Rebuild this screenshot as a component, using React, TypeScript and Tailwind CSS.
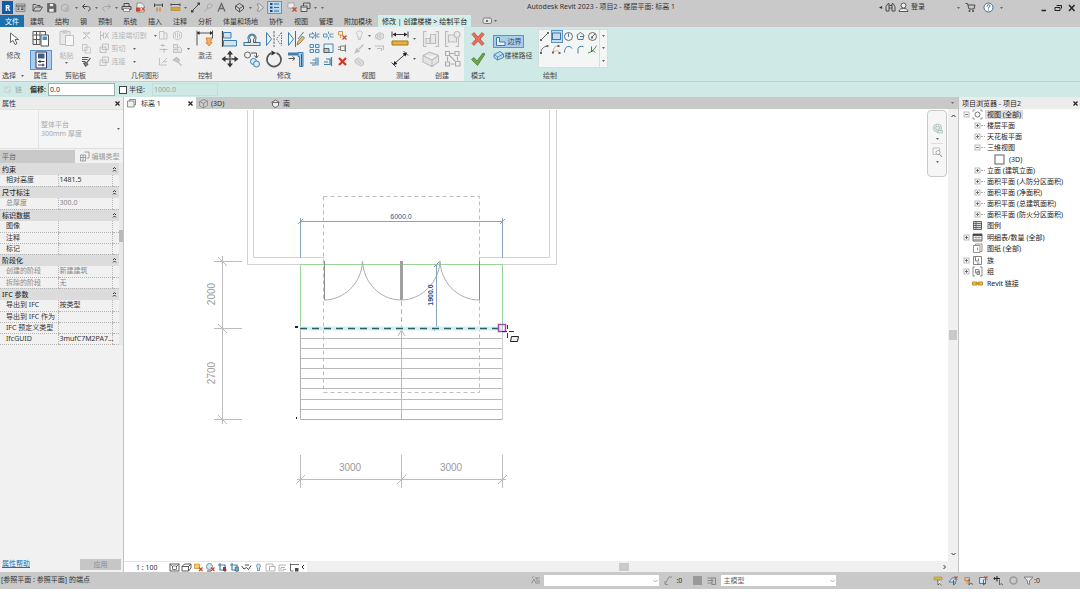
import React from "react";

// Icon art is drawn on a grid of half pixels: an 11px icon is 22 units wide, an 18px one 36.
const D = "#4a4a4a";
const G = "#bdbdbd";
const B = "#3f7fae";
const O = "#d98a3a";
const R = "#c8452f";

const ICONS: Record<string, React.ReactNode> = {
  home: <><rect x="2" y="4" width="18" height="15" stroke={D} /><path d="M2 8h18M5 12h4M5 15h4M12 12h5M12 15h5" stroke={D} strokeWidth="2" /></>,
  open: <path d="M2 18V5h6l2 2h6v4M2 18l5-8h14l-5 8z" stroke={D} strokeWidth="1.8" />,
  save: <><path d="M3 3h14l3 3v14H3z" fill="#666" stroke={D} /><path d="M7 3h8v6H7zM6 13h10v7H6z" fill="#eee" stroke={D} /></>,
  sync: <><path d="M3 8l7-4 7 4v7l-7 4-7-4z" stroke="#a0a0a0" strokeWidth="1.6" /><circle cx="14" cy="15" r="5" fill="#b5b5b5" /></>,
  undo: <path d="M8 4L3 9l5 5M3 9h10c7 0 7 8 1 9" stroke={D} strokeWidth="2" />,
  redo: <path d="M14 4l5 5-5 5M19 9H9C2 9 2 17 8 18" stroke="#a5a5a5" strokeWidth="2" />,
  print: <><path d="M6 9V3h10v6M6 15H2V9h18v6h-4" stroke={D} strokeWidth="2" /><path d="M5 13h12v6H5z" fill="#eee" stroke={D} /></>,
  pdf: <><path d="M4 2h9l5 5v13H4z" fill="#eee" stroke={D} /><path d="M2 11h9v8H2z" fill={R} /><path d="M13 10l6 8M19 10l-6 8" stroke={R} strokeWidth="2" /></>,
  dimv: <><path d="M3 3v7M19 3v7M3 6h16" stroke={D} strokeWidth="2" /><path d="M8 11v8M14 11v8" stroke={O} strokeWidth="3" /></>,
  ruler: <><path d="M2 3v5M20 3v5M2 5h18" stroke={D} strokeWidth="2" /><rect x="2" y="11" width="18" height="6" fill="#e0a32e" stroke="#a87716" /></>,
  line: <><path d="M4 18L18 4" stroke={D} strokeWidth="2" /><path d="M2 16h5v5H2zM15 1h5v5h-5z" fill={D} /></>,
  tag: <path d="M3 19l6-7M9 12V6l5-3 5 4-4 5z" stroke="#aaa" strokeWidth="2" />,
  textA: <path d="M4 19L11 3l7 16M7 13h8" stroke="#666" strokeWidth="2.6" />,
  cube: <path d="M3 8l8-5 8 5v6l-8 6-8-6zM3 8l8 5 8-5M11 13v7" stroke={D} strokeWidth="1.8" />,
  section: <path d="M4 4h5l8 7-8 7H4l4-7z" fill="#ddd" stroke="#888" strokeWidth="1.8" />,
  thin: <><path d="M2 4h5M2 11h5M2 18h5" stroke="#2d4c6e" strokeWidth="4" /><path d="M10 4h10M10 11h10M10 18h10" stroke="#2d4c6e" strokeWidth="1.6" /></>,
  close: <><path d="M2 2h12v10H2z" fill="#eee" stroke="#777" /><path d="M11 11l8 8M19 11l-8 8" stroke={R} strokeWidth="2.6" /></>,
  windows: <><path d="M7 2h13v11H7z" stroke={D} strokeWidth="1.8" /><path d="M2 8h12v11H2z" fill="#ddd" stroke={D} strokeWidth="1.8" /><path d="M2 11h12" stroke={D} /></>,
  bino: <path d="M2 18V9l4-6h2v15zM20 18V9l-4-6h-2v15zM8 7h6M8 12h6" stroke={D} strokeWidth="2" />,
  user: <><circle cx="11" cy="7" r="5" fill="#eee" stroke={D} strokeWidth="1.8" /><path d="M2 19c1-5 4-6 9-6s8 1 9 6z" fill="#eee" stroke={D} strokeWidth="1.8" /></>,
  cart: <><path d="M1 3h4l3 11h10l2-8H6" stroke={D} strokeWidth="2" /><circle cx="9" cy="18" r="2" fill={D} /><circle cx="16" cy="18" r="2" fill={D} /></>,
  help: <><circle cx="11" cy="11" r="9" fill="#fff" stroke="#2f5c93" strokeWidth="1.8" /><path d="M8 9c0-5 7-4 6-1-1 2-3 2-3 5M11 15v2" stroke="#2f5c93" strokeWidth="2" /></>,
  cut: <path d="M4 4l14 14M18 4L4 18M5 6h12M5 16h5" stroke={G} strokeWidth="2" />,
  copy: <path d="M3 3h9v12H3zM8 8h9l2 2v10H8z" fill="#f0f0f0" stroke={G} strokeWidth="1.6" />,
  match: <><path d="M2 3h13M2 7h11M2 11h7" stroke="#555" strokeWidth="2.4" /><path d="M19 4l-8 10" stroke={D} strokeWidth="2.4" /><path d="M5 14l6-1 3 4-5 4z" fill="#777" stroke={D} strokeWidth="1.6" /></>,
  cope: <path d="M3 2v18M3 11h6M9 5v12M12 5l7 12M19 5l-7 12" stroke={G} strokeWidth="2" />,
  join: <path d="M7 2h12v11H7zM2 8h12v11H2z" fill="#ececec" stroke={G} strokeWidth="1.8" />,
  box: <path d="M3 3h9v15H3zM12 6h6v12h-6" stroke={G} strokeWidth="1.8" />,
  solid: <path d="M3 6l8-4 8 4v10l-8 4-8-4zM7 6v9M11 5v12M15 7v8" stroke={G} strokeWidth="1.6" />,
  wallj: <path d="M9 2v5M5 5h9M3 13h16M12 11v8" stroke={G} strokeWidth="2.4" />,
  split: <path d="M3 4v14h15M7 15L18 4M12 12l6-1" stroke={G} strokeWidth="1.8" />,
  paint: <path d="M3 3h8v7H3zM3 13h8v6H3zM11 11l4-4 4 4v8h-8" fill="#e6e6e6" stroke={G} strokeWidth="1.8" />,
  hammer: <path d="M3 8l6-5 6 5-4 4zM11 11l8 8" fill="#ccc" stroke={G} strokeWidth="2.6" />,
  splitA: <><path d="M1 8h6V5l4 6-4 6v-3H1z" stroke={B} strokeWidth="1.6" /><path d="M21 8h-5v6h5M13 4v14" stroke={B} strokeWidth="1.6" /></>,
  splitB: <path d="M1 8h7v6H1zM21 8h-7v6h7M11 3v5M11 14v5" stroke={B} strokeWidth="1.6" />,
  unpin: <><path d="M3 3h8v7H3zM7 10v6" stroke={O} strokeWidth="1.8" /><path d="M11 11l8 8M19 11l-8 8" stroke={R} strokeWidth="2.4" /></>,
  array: <path d="M2 3h7v6H2zM13 3h7v6h-7zM2 13h7v6H2zM13 13h7v6h-7z" fill="#dcebf5" stroke={B} strokeWidth="1.8" />,
  scale: <><path d="M2 2h18v17H2z" fill="#eaf3f8" stroke={B} strokeWidth="1.8" /><path d="M2 11h10v8H2z" fill="#a9cde4" stroke={D} strokeWidth="1.6" /></>,
  pin: <path d="M7 6h9v9H7zM2 8h5M2 13h5M17 3v15" stroke="#777" strokeWidth="1.8" />,
  trimA: <path d="M2 14h12M14 3v16M18 3v16M7 8h5M6 18h6" stroke={B} strokeWidth="2.2" />,
  trimB: <path d="M2 17h12V6h-8M17 2v18M2 12h8" stroke={B} strokeWidth="2.4" />,
  del: <path d="M4 4l14 14M18 4L4 18" stroke="#cc3a2a" strokeWidth="4.4" />,
  bulb: <path d="M11 2c7 0 7 7 3 10v4H8v-4C4 9 4 2 11 2zM8 19h6" stroke={G} strokeWidth="1.8" />,
  boxes: <path d="M3 10l8-5 8 3v8l-8 4-8-4zM7 8v9M12 7v10" fill="#ddd" stroke={G} strokeWidth="1.6" />,
  brush: <path d="M19 3L10 12M3 19l3-7 4 4z" stroke={G} strokeWidth="2.8" />,
  lwork: <path d="M2 6h17v8M6 11h9v5" stroke={G} strokeWidth="2.2" />,
  dispb: <path d="M2 8l7-4 10 7v6l-6 3L2 13zM6 9l8 6" fill="#ddd" stroke={G} strokeWidth="1.8" />,
  dline: <><path d="M4 18L18 4" stroke={D} strokeWidth="1.8" /><path d="M2 16h4v4H2zM16 2h4v4h-4z" fill="#666" /></>,
  drect: <rect x="3" y="4" width="16" height="13" stroke="#2f6f9f" strokeWidth="1.8" />,
  dcirc: <><circle cx="11" cy="11" r="8" stroke={D} strokeWidth="1.6" /><path d="M11 5v7" stroke={B} strokeWidth="2" /></>,
  dcirc2: <><path d="M11 3l7 5-2 9H6L4 8z" stroke={D} strokeWidth="1.6" /><path d="M10 11h8" stroke={B} strokeWidth="2" /></>,
  dcirc3: <><circle cx="11" cy="11" r="8" stroke={D} strokeWidth="1.6" /><path d="M10 12l6-6" stroke={D} strokeWidth="1.8" /><path d="M8 11h4v4H8z" fill="#666" /></>,
  arc1: <><path d="M4 18C4 10 9 5 17 4" stroke={D} strokeWidth="1.6" /><path d="M2 16h4v4H2zM15 2h4v4h-4z" fill="#666" /></>,
  arc2: <><path d="M4 17C5 7 9 3 14 4" stroke={O} strokeWidth="1.6" /><path d="M5 17C9 12 14 13 17 17" stroke={O} strokeWidth="1.2" /><path d="M2 15h4v4H2zM15 16h4v4h-4zM13 2h4v4h-4z" fill="#666" /></>,
  arc3: <path d="M3 17C3 3 15 2 18 9" stroke={B} strokeWidth="2" />,
  arc4: <path d="M6 19V9c1-4 6-5 11-4" stroke={B} strokeWidth="2" />,
  pick: <><path d="M2 18C10 16 16 10 19 3" stroke="#4d9a4a" strokeWidth="2" /><path d="M9 5v11l3-3 4 4" stroke={D} strokeWidth="1.6" /></>,
  boundary: <path d="M3 3h6v9h11v7H3z" fill="#eaf5fb" stroke="#2f6f9f" strokeWidth="1.8" />,
  path: <><path d="M2 9l12-6 7 5v7l-12 5-7-5z" fill="#bcdcee" stroke={B} strokeWidth="1.8" /><path d="M2 9l7 5 12-6M9 14v6" stroke={B} strokeWidth="1.6" /></>,
  sheet: <path d="M3 6h13v12H3zM7 6V3h12v11h-3" fill="#eee" stroke="#777" strokeWidth="1.6" />,
  view3: <path d="M3 7l9-4 7 3v9l-8 5-8-4zM3 7l8 4 8-5M11 11v9" stroke="#888" strokeWidth="1.6" />,
  hand: <path d="M3 9l8-5 8 5M5 9h12v5c-2 6-10 6-12 0z" fill="#eee" stroke={D} strokeWidth="1.6" />,
  etype: <path d="M3 8h10v12H3zM3 13h10M8 8v12M11 2h9v12h-5" stroke="#999" strokeWidth="1.8" />,
  detail: <><rect x="2" y="4" width="18" height="14" stroke={D} strokeWidth="1.8" /><path d="M2 4l6 6M20 4l-6 6M7 8h8v7H7z" stroke={D} strokeWidth="1.4" /></>,
  vstyle: <path d="M2 9l5-5h13v8l-5 6H2zM2 9h13v9M15 9l5-5" stroke={D} strokeWidth="1.8" />,
  sunoff: <><path d="M3 4h10v9H3z" fill="#f2d25a" stroke={O} strokeWidth="1.6" /><path d="M12 11l7 7M19 11l-7 7" stroke={R} strokeWidth="2.4" /></>,
  shadow: <><circle cx="9" cy="9" r="6" fill="#dbe6ee" stroke="#68839a" strokeWidth="1.8" /><path d="M4 18h8" stroke={D} strokeWidth="2" /><path d="M12 11l7 7M19 11l-7 7" stroke={R} strokeWidth="2.2" /></>,
  crop: <><path d="M6 2v14h14M2 6h14v14" stroke={B} strokeWidth="2.4" /><path d="M12 10h6v8h-6z" fill="#a03838" /></>,
  cropb: <><path d="M6 2v14h14M2 6h14v14" stroke={B} strokeWidth="2.4" /><path d="M12 10h7v8h-7z" fill="#6aa5cc" stroke={D} /></>,
  glass: <path d="M1 8l5 6 5-3 4 4 5-8M8 6h8" stroke={D} strokeWidth="2" />,
  bulb2: <path d="M11 4c5 0 4 6 2 8v5h-4v-5c-2-2-3-8 2-8z" fill="#cfe8f3" stroke={B} strokeWidth="1.6" />,
  tview: <path d="M2 4h14v5M2 4v14h5M9 9h11v9H9z" stroke="#aaa" strokeWidth="1.8" />,
  anal: <path d="M4 19V6h14M8 19v-8h8M12 19v-4h6" stroke="#aaa" strokeWidth="1.8" />,
  revc: <><path d="M2 5h18M3 3v15h6" stroke={D} strokeWidth="1.6" /><path d="M12 12h7v7h-7z" fill={D} /></>,
  wset: <path d="M3 17l5-9 4 9M10 6h9M14 6v12M18 10v8M4 6l3-3" stroke="#8a8a8a" strokeWidth="1.8" />,
  edreq: <path d="M4 18L12 4h6M4 12v7h6" stroke="#888" strokeWidth="1.8" />,
  opt: <path d="M3 6h16M3 11h12M3 16h8M12 5v14h7V5" stroke="#888" strokeWidth="2.2" />,
  selA: <><path d="M2 4h16v6H2z" fill="#e3b53a" stroke="#a87c1f" /><path d="M10 9v11l3-3 4 3" fill="#fff" stroke={D} strokeWidth="1.6" /></>,
  selB: <><path d="M2 14l6-8h8v8z" fill="#cfe0ef" stroke="#4878a8" strokeWidth="1.8" /><path d="M13 3l6 6M19 3l-6 6" stroke={R} strokeWidth="2.2" /><path d="M11 10v10l5-4" stroke={D} strokeWidth="1.6" /></>,
  selC: <><path d="M4 5h9v6H4zM8 11v6" stroke={O} strokeWidth="2.4" /><path d="M12 8v12l3-4 5 3" stroke={D} strokeWidth="1.6" /></>,
  selD: <><path d="M3 5h12v12H3z" fill="#d2e6f3" stroke={B} strokeWidth="2" /><path d="M13 3l6 6M19 3l-6 6" stroke={R} strokeWidth="2.2" /><path d="M11 9v11l5-4" stroke={D} strokeWidth="1.6" /></>,
  selE: <><path d="M2 7h12M8 2v11M4 5L2 7l2 2" stroke="#222" strokeWidth="2.2" /><path d="M13 9v11l3-3 4 3" stroke={D} strokeWidth="1.6" /></>,
  ring: <circle cx="11" cy="11" r="7" stroke="#999" strokeWidth="3" />,
  funnel: <path d="M2 4h18l-7 8v7l-4-2v-5z" fill="#e4e4e4" stroke="#777" strokeWidth="1.8" />,
  views: <><circle cx="11" cy="11" r="5" stroke="#666" strokeWidth="1.8" /><path d="M2 6V2h4M16 2h4v4M20 16v4h-4M6 20H2v-4" stroke="#888" strokeWidth="1.6" /></>,
  view3d: <rect x="2" y="2" width="18" height="18" fill="#fff" stroke="#777" strokeWidth="2.4" />,
  legend: <><path d="M3 3h16v16H3z" fill="#ddd" stroke="#555" strokeWidth="1.8" /><path d="M3 7h16M3 11h16M3 15h16M8 3v16" stroke="#555" strokeWidth="1.6" /></>,
  sched: <><path d="M2 4h18v14H2z" fill="#f5f5f5" stroke="#555" strokeWidth="1.8" /><path d="M2 6h18" stroke="#333" strokeWidth="3.4" /><path d="M2 11h18M2 15h18M8 6v12M14 6v12" stroke="#888" strokeWidth="1.2" /></>,
  sheets: <path d="M3 5h4V2h13v15h-4M3 5h13v14H3zM11 9v6" stroke="#888" strokeWidth="1.8" />,
  family: <path d="M3 3h16v16H3zM7 3v9h6V7M10 16h5" stroke="#777" strokeWidth="1.8" />,
  group: <path d="M6 2H2v18h4M16 2h4v18h-4M7 7h7v7H7zM10 11h5v6h-5z" stroke="#777" strokeWidth="1.7" />,
  link: <path d="M1 8h9v6H1zM12 8h9v6h-9zM7 11h8" fill="#e8c454" stroke="#b8902a" strokeWidth="2" />,
  wheel: <><circle cx="11" cy="10" r="8" fill="#e5efed" stroke="#9fb5b3" strokeWidth="1.6" /><circle cx="11" cy="10" r="4" stroke="#9fb5b3" strokeWidth="1.6" /><path d="M12 15h9v5h-9z" fill="#dff0e9" stroke="#87a89b" /></>,
  zoomr: <><path d="M2 2h13v13H2z" stroke="#b5b5b5" strokeWidth="1.6" /><circle cx="12" cy="11" r="4" fill="#fff" stroke="#999" strokeWidth="1.6" /><path d="M15 14l5 6" stroke="#999" strokeWidth="2" /></>,
};

const BIG: Record<string, React.ReactNode> = {
  arrow: <path d="M11 8v19l5-4 4 8 4-2-4-8h7z" fill="#fff" stroke="#555" strokeWidth="1.8" />,
  props: <><path d="M2 3h14v16H2zM16 3h11v7M2 10h14M9 3v16" fill="#fff" stroke="#555" strokeWidth="2" /><path d="M18 10h15v22H18z" fill="#fff" stroke="#555" strokeWidth="2" /><path d="M21 13h9v7h-9z" fill="#4b8fc0" /><path d="M2 19h14v10H2zM9 19v10" stroke="#555" strokeWidth="2" /></>,
  palette: <><path d="M8 2h21v32H8z" fill="#fff" stroke="#335" strokeWidth="2" /><path d="M12 5h13v10H12z" fill="#3c5f86" /><path d="M12 21h13M12 28h13M16 18v6M22 25v6" stroke="#335" strokeWidth="2" /></>,
  paste: <><path d="M4 5h20v26H4z" fill="#e8e8e8" stroke="#c0c0c0" strokeWidth="2" /><path d="M9 2h10v7H9z" fill="#ccc" /><path d="M15 13h16v20H15z" fill="#f6f6f6" stroke="#c0c0c0" strokeWidth="2" /></>,
  activate: <><path d="M2 3v30M33 3v16M2 8h31" stroke="#555" strokeWidth="2" /><path d="M7 4L2 8l5 4zM28 4l5 4-5 4z" fill="#222" /><path d="M20 18h12l-3 9h3l-6 7-6-7h3z" fill="#f0b070" stroke={O} strokeWidth="2" /></>,
  align: <><path d="M3 2v32" stroke="#444" strokeWidth="2.4" /><path d="M5 5h15v11H5zM5 21h26v11H5z" fill="#cfe3f1" stroke={B} strokeWidth="2" /></>,
  offset: <><path d="M2 31h32v-6h-9v-5a8 8 0 1 0-14 0v5H2z" fill="#d9e9f4" stroke={B} strokeWidth="2.2" /><path d="M8 25h7v-6a5 5 0 1 1 6 0v6h7" fill="#f0f0f0" stroke="#555" strokeWidth="2" /></>,
  mirrorA: <><path d="M3 5v26l10-13z" fill="#eef6fa" stroke={B} strokeWidth="2" /><path d="M18 2v32" stroke="#666" strokeWidth="2" strokeDasharray="5 2" /><path d="M33 5v26L23 18z" stroke={B} strokeWidth="2" strokeDasharray="3 2" /></>,
  mirrorB: <><path d="M3 5v26l10-13z" fill="#eef6fa" stroke={B} strokeWidth="2" /><path d="M17 2v32" stroke="#666" strokeWidth="2" /><path d="M33 4L22 18" stroke={B} strokeWidth="2" /><path d="M20 30l2-7 9-11 4 4-10 11z" fill="#eec06a" stroke="#7b6a43" strokeWidth="1.6" /></>,
  move: <><path d="M18 8v20M8 18h20" stroke="#333" strokeWidth="3" strokeDasharray="7 6" /><path d="M18 1l6 8H12zM18 35l6-8H12zM1 18l8-6v12zM35 18l-8-6v12z" fill="#333" /><path d="M15 15h6v6h-6z" fill="#666" /></>,
  copyb: <><circle cx="9" cy="10" r="6" stroke="#666" strokeWidth="2" /><path d="M16 6h11v8M23 11l4 5 4-5" stroke="#555" strokeWidth="2" /><circle cx="21" cy="23" r="6" fill="#dcebf5" stroke={B} strokeWidth="2" /><circle cx="27" cy="28" r="6" fill="#dcebf5" stroke={B} strokeWidth="2" /></>,
  rotate: <><path d="M23 6a14 14 0 1 1-10 0" stroke="#555" strokeWidth="3.4" /><path d="M13 1v10l9-5z" fill="#333" /></>,
  trim: <><path d="M2 8h20" stroke={B} strokeWidth="6" /><path d="M22 5h10v28h-7V13h-3z" fill="#a8cde6" stroke={B} strokeWidth="2" /><path d="M3 17h12M11 13l5 4-5 4M29 8v24" stroke="#555" strokeWidth="2" /></>,
  measure: <><path d="M2 3v12M34 3v12M4 9h28" stroke="#444" strokeWidth="2" /><path d="M10 5L3 9l7 4zM26 5l7 4-7 4z" fill="#222" /><path d="M2 22h32v8H2z" fill="#e3b53a" stroke="#a87716" strokeWidth="2" /></>,
  dim: <><path d="M6 28L30 7" stroke="#444" strokeWidth="2" /><path d="M1 25l9 9M25 2l9 9" stroke="#444" strokeWidth="2" /><path d="M4 30l3-8 6 6zM32 5l-3 8-6-6z" fill="#222" /></>,
  createA: <path d="M9 3H3v30h6M27 3h6v30h-6M8 17h8v10H8zM17 9h10v18H17z" fill="#e9e9e9" stroke={G} strokeWidth="2.2" />,
  createB: <><path d="M9 3H3v30h6M29 16v17h-6M9 10h16v14H9z" fill="#e9e9e9" stroke={G} strokeWidth="2.2" /><circle cx="26" cy="9" r="6" fill="#e9e9e9" stroke={G} strokeWidth="2.2" /></>,
  createC: <path d="M2 11l13-7 18 7v13l-13 9-18-9zM2 11l18 9 13-9M20 20v13" fill="#e4e4e4" stroke={G} strokeWidth="2.2" />,
  createD: <path d="M3 3h8v8H3zM22 3h8v8h-8zM3 24h8v8H3zM23 23h9v9h-9zM12 7h8M7 13v9M13 28h8M27 13v8M12 12l10 10" stroke="#aaa" strokeWidth="2.2" />,
  cancel: <path d="M6 9l4-4 8 9 8-9 4 4-8 9 8 9-4 4-8-9-8 9-4-4 8-9z" fill="#e8705c" stroke="#c54a39" strokeWidth="1.6" />,
  finish: <path d="M5 19l5-4 6 7L28 6l4 2-15 23z" fill="#6fa54c" stroke="#4c8032" strokeWidth="1.6" />,
};

const Ic = ({ n }: { n: string }) => (
  <svg width="11" height="11" viewBox="0 0 22 22" fill="none" className="shrink-0" aria-hidden="true">{ICONS[n]}</svg>
);

const BigIc = ({ n }: { n: string }) => (
  <svg width="18" height="18" viewBox="0 0 36 36" fill="none" className="shrink-0" aria-hidden="true">{BIG[n]}</svg>
);

const Caret = () => (
  <svg width="5" height="4" viewBox="0 0 10 8" className="shrink-0" aria-hidden="true"><path d="M2 2h6L5 6z" fill="#666" /></svg>
);

const Btn = ({ n, label, className = "" }: { n: string; label: string; className?: string }) => (
  <button aria-label={label} className={`flex shrink-0 items-center justify-center ${className || "w-[13px]"}`}><Ic n={n} /></button>
);

const BigBtn = ({ n, label }: { n: string; label: string }) => (
  <button aria-label={label} className="flex h-5 w-[22px] items-center justify-center"><BigIc n={n} /></button>
);

const Drop = () => (
  <button aria-label="更多" className="flex w-[7px] shrink-0 items-center justify-center"><Caret /></button>
);

function TitleBar() {
  return (
    <header className="flex h-[15px] items-center bg-[#c9c9c9]">
      <div className="flex h-full items-center">
        <button className="ml-0.5 h-[13px] w-[11px] bg-[#1858a8] text-[8px] leading-[9px] font-bold text-white">R</button>
        <Btn n="home" label="主视图" className="w-[15px]" />
        <Btn n="open" label="打开" className="ml-0.5 w-[15px]" />
        <Btn n="save" label="保存" />
        <Btn n="sync" label="同步" className="w-[15px]" />
        <Drop />
        <Btn n="undo" label="放弃" />
        <Drop />
        <Btn n="redo" label="重做" />
        <Drop />
        <Btn n="print" label="打印" />
        <Btn n="pdf" label="PDF" className="w-[15px]" />
        <Btn n="dimv" label="尺寸" className="ml-1 w-[13px]" />
        <Btn n="ruler" label="测量" className="ml-1 w-[13px]" />
        <Drop />
        <Btn n="line" label="对齐尺寸标注" />
        <Btn n="tag" label="标记" />
        <Btn n="textA" label="文字" />
        <Btn n="cube" label="默认三维视图" className="ml-1 w-[15px]" />
        <Drop />
        <Btn n="section" label="剖面" />
        <button aria-label="细线" className="flex h-[13px] w-[15px] items-center justify-center border border-[#5f9bc8] bg-[#b9daf0]"><Ic n="thin" /></button>
        <Btn n="close" label="关闭非活动视图" className="ml-1 w-[13px]" />
        <Btn n="windows" label="切换窗口" />
        <Drop />
        <Drop />
      </div>
      <h1 className="flex-1 pb-0.5 text-center text-[7px] leading-[9px] whitespace-nowrap text-[#333]">Autodesk Revit 2023 - 项目2 - 楼层平面: 标高 1</h1>
      <div className="flex h-full items-center pr-px text-[7px] text-[#333]">
        <button aria-label="展开" className="w-2 text-[6px]">◂</button>
        <Btn n="bino" label="搜索" />
        <Btn n="user" label="帐户" />
        <button className="w-[45px] pl-px text-left">登录</button>
        <Drop />
        <Btn n="cart" label="商店" className="w-4" />
        <Btn n="help" label="帮助" className="w-5" />
        <Drop />
        <div className="ml-8 flex">
          <button aria-label="最小化" className="flex w-3.5 justify-center"><svg width="8" height="8" viewBox="0 0 16 16"><path d="M3 13h9" stroke="#222" strokeWidth="3" /></svg></button>
          <button aria-label="还原" className="flex w-3.5 justify-center"><svg width="8" height="8" viewBox="0 0 16 16" fill="none"><path d="M5 3h10v6M2 7h10v6H2z" stroke="#222" strokeWidth="2" /></svg></button>
          <button aria-label="关闭" className="flex w-3.5 justify-center"><svg width="8" height="8" viewBox="0 0 16 16"><path d="M2 2l11 12M13 2L2 14" stroke="#222" strokeWidth="3" /></svg></button>
        </div>
      </div>
    </header>
  );
}

const TABS = ["建筑", "结构", "钢", "预制", "系统", "插入", "注释", "分析", "体量和场地", "协作", "视图", "管理", "附加模块"];

function RibbonTabs() {
  return (
    <nav className="flex h-3 items-stretch gap-px bg-[#c9c9c9] text-[7px] leading-[11px] whitespace-nowrap text-[#333]">
      <button className="w-6 bg-[#1d6fae] text-white">文件</button>
      {TABS.map(t => <button key={t} className="px-[5px]">{t}</button>)}
      <button className="bg-[#d5eeea] px-1 text-[#222]">修改 | 创建楼梯 &gt; 绘制平台</button>
      <button aria-label="显示选项" className="ml-2.5 flex items-center">
        <svg width="11" height="8" viewBox="0 0 22 16" fill="none"><rect x="2" y="2" width="17" height="11" rx="3" fill="#e5e5e5" stroke="#666" strokeWidth="1.6" /><circle cx="10" cy="8" r="2" fill="#444" /></svg>
        <Caret />
      </button>
    </nav>
  );
}

function Panel({ label, w, children, mint }: { label: React.ReactNode; w: string; children: React.ReactNode; mint?: boolean }) {
  return (
    <section className={`flex shrink-0 flex-col ${w} ${mint ? "" : "bg-[#f0f0f0]"}`}>
      <div className="flex h-[43px] justify-center pt-0.5">{children}</div>
      <div className="flex h-[11px] items-center justify-center gap-1 text-[7px] leading-[11px] text-[#444]">{label}</div>
    </section>
  );
}

const SmallCol = ({ items, w = "w-3.5" }: { items: [string, string][]; w?: string }) => (
  <div className={`flex flex-col ${w}`}>
    {items.map(([n, label], i) => (
      <button key={i} aria-label={label} className="flex h-[13px] items-center justify-center"><Ic n={n} /></button>
    ))}
  </div>
);

const LabelBtn = ({ n, text }: { n: string; text: string }) => (
  <button className="flex h-[13px] items-center gap-0.5 text-[7px] leading-[9px] whitespace-nowrap text-[#b5b5b5]">
    <Ic n={n} />{text}<span className="w-0.5" /><Caret />
  </button>
);

function Ribbon() {
  const draw = ["dline", "drect", "dcirc", "dcirc2", "dcirc3", "arc1", "arc2", "arc3", "arc4", "pick"];
  return (
    <div className="flex border-b border-[#bfd0ce] bg-[#cfeae6]">
      <Panel label={<>选择<Caret /></>} w="w-[27px]">
        <button className="flex flex-col items-center text-[7px] leading-[10px] text-[#555]"><BigIc n="arrow" /><span className="mt-1">修改</span></button>
      </Panel>
      <Panel label="属性" w="w-[27px]">
        <div className="flex flex-col items-center gap-px">
          <BigBtn n="props" label="类型属性" />
          <button aria-label="属性" className="flex h-5 w-[22px] items-center justify-center border border-[#5c94c4] bg-[#a9cdee]"><BigIc n="palette" /></button>
        </div>
      </Panel>
      <Panel label="剪贴板" w="w-[43px]">
        <button className="flex w-[22px] flex-col items-center text-[7px] leading-[10px] text-[#b5b5b5]"><BigIc n="paste" /><span className="mt-1">粘贴</span><Caret /></button>
        <SmallCol items={[["cut", "剪切"], ["copy", "复制"], ["match", "匹配类型"]]} w="w-[18px]" />
      </Panel>
      <Panel label="几何图形" w="w-24">
        <div className="flex w-[58px] shrink-0 flex-col items-start">
          <LabelBtn n="cope" text="连接端切割" />
          <LabelBtn n="join" text="剪切" />
          <LabelBtn n="join" text="连接" />
        </div>
        <SmallCol items={[["box", "屋顶连接"], ["wallj", "墙连接"], ["split", "分割面"]]} />
        <SmallCol items={[["solid", "梁柱连接"], ["paint", "填色"], ["hammer", "拆除"]]} />
        <div className="flex flex-col pt-[13px]"><span className="flex h-[13px]"><Drop /></span></div>
      </Panel>
      <Panel label="控制" w="w-6">
        <button className="flex flex-col items-center text-[7px] leading-[10px] text-[#555]"><BigIc n="activate" /><span className="mt-1">激活</span></button>
      </Panel>
      <Panel label="修改" w="w-[134px]">
        <div className="grid auto-rows-min grid-cols-4">
          {[["align", "对齐"], ["offset", "偏移"], ["mirrorA", "镜像-拾取轴"], ["mirrorB", "镜像-绘制轴"], ["move", "移动"], ["copyb", "复制"], ["rotate", "旋转"], ["trim", "修剪"]].map(([n, l]) => <BigBtn key={n} n={n} label={l} />)}
        </div>
        <SmallCol items={[["splitA", "拆分图元"], ["array", "阵列"], ["trimA", "修剪单个"]]} />
        <SmallCol items={[["splitB", "用间隙拆分"], ["scale", "缩放"], ["trimB", "修剪多个"]]} />
        <SmallCol items={[["unpin", "解锁"], ["pin", "锁定"], ["del", "删除"]]} />
      </Panel>
      <Panel label="视图" w="w-[35px]">
        <SmallCol items={[["bulb", "隐藏"], ["brush", "替换"], ["dispb", "置换"]]} />
        <div className="flex flex-col"><span className="flex h-[13px]"><Drop /></span><span className="flex h-[13px]"><Drop /></span></div>
        <SmallCol items={[["boxes", "选择框"], ["lwork", "线处理"]]} w="w-3" />
      </Panel>
      <Panel label="测量" w="w-[34px]">
        <div><BigBtn n="measure" label="测量" /><BigBtn n="dim" label="尺寸标注" /></div>
        <div className="flex flex-col"><span className="flex h-5"><Drop /></span><span className="flex h-5"><Drop /></span></div>
      </Panel>
      <Panel label="创建" w="w-11">
        <div className="grid auto-rows-min grid-cols-2">
          {[["createA", "创建组"], ["createB", "创建类似"], ["createC", "创建部件"], ["createD", "创建零件"]].map(([n, l]) => <BigBtn key={n} n={n} label={l} />)}
        </div>
      </Panel>
      <Panel label="模式" w="w-7" mint>
        <div><BigBtn n="cancel" label="取消" /><BigBtn n="finish" label="完成" /></div>
      </Panel>
      <Panel label="绘制" w="w-[116px]" mint>
        <div className="flex w-[45px] shrink-0 flex-col items-start gap-px pt-1.5 text-[7px] leading-[11px] whitespace-nowrap text-[#444]">
          <button className="flex h-[13px] w-[31px] items-center gap-0.5 border border-[#5c94c4] bg-[#a9cdee] pl-px"><Ic n="boundary" />边界</button>
          <button className="flex h-[13px] items-center gap-px"><Ic n="path" />楼梯路径</button>
        </div>
        <div className="flex h-[39px] border border-[#d5dedd] bg-[#f4f6f6]">
          <div className="grid auto-rows-min grid-cols-5">
            {draw.map(n => (
              <button key={n} aria-label={n} className={`flex h-[13px] w-3 items-center justify-center ${n === "drect" ? "border border-[#5c94c4] bg-[#c4dff2]" : ""}`}><Ic n={n} /></button>
            ))}
          </div>
          <div className="flex w-2 flex-col justify-around border-l border-[#d5dedd]"><Drop /><Drop /><Drop /></div>
        </div>
      </Panel>
    </div>
  );
}

function OptionsBar() {
  return (
    <div className="flex h-[15px] items-center bg-[#cfeae6] text-[7px] leading-[9px] text-[#333]">
      <label className="flex w-[30px] items-center gap-1 pl-1 text-[#9aa]">
        <input type="checkbox" checked disabled readOnly className="m-0 size-[7px] opacity-50" />链
      </label>
      <label htmlFor="offset" className="w-[18px] font-bold whitespace-nowrap">偏移:</label>
      <input id="offset" defaultValue="0.0" className="h-[13px] w-[67px] border border-[#9ab0ae] bg-white px-px" />
      <label className="ml-1 flex w-[33px] items-center gap-0.5 whitespace-nowrap">
        <input type="checkbox" className="m-0 size-2 appearance-none border border-[#444] bg-white" />半径:
      </label>
      <input aria-label="半径值" disabled defaultValue="1000.0" className="h-[13px] w-[66px] border border-[#c4dedb] px-px text-[#8fa5a3]" />
    </div>
  );
}

type Row = [string, string, boolean?];
const PROPS: { group: string; rows: Row[] }[] = [
  { group: "约束", rows: [["相对高度", "1481.5"]] },
  { group: "尺寸标注", rows: [["总厚度", "300.0", true]] },
  { group: "标识数据", rows: [["图像", ""], ["注释", ""], ["标记", ""]] },
  { group: "阶段化", rows: [["创建的阶段", "新建建筑", true], ["拆除的阶段", "无", true]] },
  { group: "IFC 参数", rows: [["导出到 IFC", "按类型"], ["导出到 IFC 作为", ""], ["IFC 预定义类型", ""], ["IfcGUID", "3mufC7M2PA7..."]] },
];

function Properties() {
  return (
    <aside className="flex w-[124px] shrink-0 flex-col border-r border-[#c4c4c4] bg-[#f1f1f1] text-[7px] leading-[9px] text-[#333]">
      <div className="flex h-3 items-center justify-between bg-[#ececec] px-0.5">
        <h2>属性</h2>
        <CloseX />
      </div>
      <button className="flex h-10 items-center border-y border-[#e0e0e0] bg-[#f5f5f5] pr-0.5 text-left text-[#aaa]">
        <span className="h-full w-[39px] border-r border-[#e2e2e2]" />
        <span className="flex-1 pl-0.5">整体平台<br />300mm 厚度</span>
        <Caret />
      </button>
      <div className="flex h-[14px] items-center">
        <select aria-label="类型" className="h-[13px] w-[75px] appearance-none bg-[#c9c9c9] px-0.5 text-[#666]"><option>平台</option></select>
        <button className="flex flex-1 items-center justify-center gap-0.5 text-[#999]"><Ic n="etype" />编辑类型</button>
      </div>
      <div className="flex">
        <table className="w-[119px] table-fixed border-collapse">
          <colgroup><col className="w-[58px]" /><col /><col className="w-[7px]" /></colgroup>
          <tbody>
            {PROPS.map(({ group, rows }) => (
              <React.Fragment key={group}>
                <tr className="h-3 bg-[#dcdcdc]">
                  <th colSpan={2} className="p-0 pl-0.5 text-left font-medium">{group}</th>
                  <td className="p-0">
                    <svg width="5" height="7" viewBox="0 0 10 14" fill="none"><path d="M2 6l3-3 3 3M2 11l3-3 3 3" stroke="#333" strokeWidth="2" /></svg>
                  </td>
                </tr>
                {rows.map(([k, v, off]) => (
                  <tr key={k} className={`h-[11px] ${off ? "text-[#888]" : ""}`}>
                    <td className="border-b border-dotted border-[#b5b5b5] p-0 pl-1.5 leading-[10px] whitespace-nowrap">{k}</td>
                    <td className="border-b border-l border-dotted border-[#b5b5b5] p-0 pl-px leading-[10px] whitespace-nowrap">{v}</td>
                    <td className="border-b border-l border-dotted border-[#b5b5b5] p-0" />
                  </tr>
                ))}
              </React.Fragment>
            ))}
          </tbody>
        </table>
        <div className="flex-1 bg-[#e9e9e9] pt-[67px]"><div className="h-3 bg-[#b9b9b9]" /></div>
      </div>
      <div className="mt-auto flex h-[13px] items-start justify-between pr-0.5 pl-0.5">
        <a href="#help" className="text-[#1d6fae] underline">属性帮助</a>
        <button disabled className="h-[11px] w-[41px] bg-[#c6c6c6] text-[#8b8b8b]">应用</button>
      </div>
    </aside>
  );
}

const CloseX = () => (
  <button aria-label="关闭" className="flex items-center">
    <svg width="7" height="7" viewBox="0 0 14 14"><path d="M3 3l8 8M11 3l-8 8" stroke="#222" strokeWidth="2.4" /></svg>
  </button>
);

const Digits = "'Liberation Sans Narrow', 'Liberation Sans', sans-serif";

function Plan() {
  const treads = [338, 348, 358, 368, 378, 388, 399, 409];
  return (
    <svg width="824" height="452" viewBox="124 109 824 452" fill="none" className="shrink-0" role="img" aria-label="楼层平面">
      {/* walls */}
      <path d="M247.500 110v154.500h309V110M253.500 110v147.500H324M479 257.500h70.500V110" stroke="#d2d2d2" />
      {/* opening and slab outline */}
      <path d="M323.500 196.500h156v196h-156z" stroke="#bdbdbd" strokeDasharray="4 3" />
      {/* stair run */}
      {treads.map(y => <path key={y} d={`M300 ${y + 0.5}h202`} stroke="#bababa" />)}
      <path d="M300.500 328v91.500h202" stroke="#b0b0b0" />
      <path d="M502.500 328v91" stroke="#cfcfcf" />
      <path d="M401.500 419v-89M398 336l3.500-6 3.500 6" stroke="#bababa" />
      <path d="M401.500 301v27" stroke="#b5b5b5" strokeDasharray="5 3" />
      {/* landing boundary */}
      <path d="M300.500 328v-63.500h202V328" stroke="#9bd49b" />
      {/* doors */}
      <path d="M324.500 261v39M479.500 261v39" stroke="#8b8b8b" />
      <path d="M401.500 261v39" stroke="#a0a0a0" strokeWidth="3" />
      <path d="M324 300c20 0 38-17 38.500-39 1 22 18 39 38.500 39 20 0 38-17 39-39 1 22 18 39 39.500 39" stroke="#adadad" />
      {/* temporary dimensions */}
      <path d="M300.500 258v-40M502.500 258v-40M300 221.500h203M298 224l5-5M500 224l5-5" stroke="#86a5bb" />
      <path d="M436.500 264v64M434 267l5-5M434 331l5-5" stroke="#86a5bb" />
      <text x="401" y="219" textAnchor="middle" fontSize="7" fontWeight="500" fill="#1f5a8a" fontFamily="'Liberation Sans', sans-serif">6000.0</text>
      <text x="433" y="295" textAnchor="middle" fontSize="7" fontWeight="600" fill="#1f4f80" transform="rotate(-90 433 295)" fontFamily="'Liberation Sans', sans-serif">1900.0</text>
      {/* reference plane being snapped to */}
      <path d="M300 328.500h202" stroke="#d3eff2" strokeWidth="4" />
      <path d="M300 328.500h202" stroke="#2b5f66" strokeWidth="1.500" strokeDasharray="7 5" />
      <path d="M295 326h3v2h-3zM296 417h1v2h-1z" fill="#222" />
      {/* permanent dimensions */}
      <path d="M222.500 256v168M214 261.500h28M214 328.500h28M214 419.500h28M218 257l9 9M218 324l9 9M218 415l9 9" stroke="#bcbcbc" />
      <path d="M300.500 455v33M401.500 455v33M502.500 455v33M297 479.500h209M296 484l9-9M397 484l9-9M498 484l9-9" stroke="#bcbcbc" />
      <g fontSize="10" fill="#9a9a9a" textAnchor="middle" fontFamily={Digits}>
        <text x="215" y="294" transform="rotate(-90 215 294)">2000</text>
        <text x="215" y="373" transform="rotate(-90 215 373)">2700</text>
        <text x="350" y="471">3000</text>
        <text x="451" y="471">3000</text>
      </g>
      {/* snap marker and pointer */}
      <rect x="498.500" y="324.500" width="7" height="7" stroke="#a04cb0" strokeWidth="1.500" />
      <path d="M502 331.500h5M509 331.500h5M507.500 325v4M507.500 333v5" stroke="#333" />
      <path d="M511.500 336.500h7l-1 5h-7z" fill="#eee" stroke="#222" />
    </svg>
  );
}

function ViewArea() {
  const controls = ["detail", "vstyle", "sunoff", "shadow", "crop", "cropb", "glass", "bulb2", "tview", "anal", "revc"];
  return (
    <main className="flex min-w-0 flex-1 flex-col border-r border-[#c4c4c4] bg-white text-[7px] leading-[9px] text-[#333]">
      <div className="flex h-3 items-center bg-[#c9c9c9]">
        <div className="flex h-full w-[72px] items-center gap-1 bg-white pr-0.5 pl-0.5">
          <Ic n="sheet" /><button className="flex-1 text-left">标高 1</button><CloseX />
        </div>
        <button className="flex w-[74px] items-center gap-0.5 pl-0.5"><Ic n="view3" />(3D)</button>
        <button className="flex items-center gap-0.5"><Ic n="hand" />南</button>
        <span className="ml-auto flex pr-0.5"><Drop /></span>
      </div>
      <div className="flex">
        <div className="relative min-w-0 flex-1 overflow-hidden">
          <Plan />
          <div className="absolute top-px right-px flex h-[67px] w-5 flex-col items-center justify-between rounded-sm border border-[#c9c9c9] bg-[#f6f6f6] py-3">
            <Btn n="wheel" label="导航控制盘" /><Caret />
            <span className="h-px w-3 bg-[#ddd]" />
            <Btn n="zoomr" label="区域放大" /><Caret />
          </div>
        </div>
        <div className="flex w-2.5 flex-col items-center justify-between bg-[#f0f0f0] py-1">
          <Chevron d="M3 8l4-4 4 4" />
          <div className="h-2.5 w-2 bg-[#c9c9c9]" />
          <Chevron d="M3 4l4 4 4-4" />
        </div>
      </div>
      <div className="flex h-[11px] items-center">
        <div className="flex h-full items-center border-t border-[#e5e5e5]">
          <button className="w-11 pl-3 text-left whitespace-nowrap">1 : 100</button>
          {controls.map(n => <Btn key={n} n={n} label={n} className="w-3" />)}
          <Chevron d="M8 2L4 6l4 4" />
        </div>
        <div className="flex h-full flex-1 items-center justify-end bg-[#f0f0f0] pr-2.5">
          <div className="mr-auto ml-auto h-2 w-2.5 bg-[#c9c9c9]" />
          <Chevron d="M5 2l4 4-4 4" />
        </div>
      </div>
    </main>
  );
}

const Chevron = ({ d }: { d: string }) => (
  <svg width="7" height="6" viewBox="0 0 14 12" fill="none" className="shrink-0" aria-hidden="true"><path d={d} stroke="#333" strokeWidth="2" /></svg>
);

const Expander = ({ open }: { open?: boolean }) => (
  <svg width="7" height="7" viewBox="0 0 14 14" fill="none" className="shrink-0" aria-hidden="true">
    <rect x="2" y="2" width="10" height="10" fill="#fff" stroke="#a8a8a8" strokeWidth="1.6" />
    <path d={open ? "M4 7h6" : "M4 7h6M7 4v6"} stroke="#555" strokeWidth="1.6" />
  </svg>
);

// [label, open?]
const CHILDREN: [string, boolean?][] = [
  ["楼层平面"], ["天花板平面"], ["三维视图", true], ["立面 (建筑立面)"],
  ["面积平面 (人防分区面积)"], ["面积平面 (净面积)"], ["面积平面 (总建筑面积)"], ["面积平面 (防火分区面积)"],
];
const ROOTS: [string, string, boolean][] = [
  ["legend", "图例", false], ["sched", "明细表/数量 (全部)", true], ["sheets", "图纸 (全部)", false],
  ["family", "族", true], ["group", "组", true], ["link", "Revit 链接", false],
];

function Browser() {
  return (
    <aside className="flex w-[121px] shrink-0 flex-col bg-white text-[7px] leading-[9px] text-[#222]">
      <div className="flex h-3 items-center justify-between bg-[#ececec] pr-px pl-[3px]">
        <h2>项目浏览器 - 项目2</h2>
        <CloseX />
      </div>
      <ul className="pl-1 whitespace-nowrap">
        <li>
          <div className="flex h-[11px] items-center gap-0.5"><Expander open /><Ic n="views" /><span className="bg-[#dcdcdc] px-0.5">视图 (全部)</span></div>
          <ul className="pl-[11px]">
            {CHILDREN.map(([t, open]) => (
              <li key={t}>
                <div className="flex h-[11px] items-center"><Expander open={open} /><span className="mr-0.5 w-1 border-t border-dotted border-[#aaa]" />{t}</div>
                {open && (
                  <ul className="pl-5"><li className="flex h-3 items-center gap-1"><Ic n="view3d" />(3D)</li></ul>
                )}
              </li>
            ))}
          </ul>
        </li>
        {ROOTS.map(([n, t, exp]) => (
          <li key={t} className="flex h-[11px] items-center gap-0.5 not-last:mb-px nth-[odd]:mb-0">
            {exp ? <Expander /> : <span className="w-[7px]" />}<Ic n={n} /><span className="pl-0.5">{t}</span>
          </li>
        ))}
      </ul>
    </aside>
  );
}

function StatusBar() {
  return (
    <footer className="flex h-[17px] items-center bg-[#c9c9c9] pr-10 text-[7px] leading-[9px] text-[#333]">
      <div className="w-[51%] shrink-0 pb-0.5 pl-px">[参照平面 : 参照平面] 的端点</div>
      <Ic n="wset" />
      <span className="w-[3px]" />
      <StatusSelect label="工作集" value="" />
      <div className="flex w-[34px] items-center gap-0.5 pl-1"><Ic n="edreq" />:0</div>
      <span className="mr-1 size-[9px] bg-[#999]" />
      <Ic n="opt" />
      <span className="w-1" />
      <StatusSelect label="设计选项" value="主模型" />
      <div className="ml-auto flex items-center gap-1">
        {["selA", "selB", "selC", "selD", "selE", "ring"].map(n => <Btn key={n} n={n} label={n} className="w-[11px]" />)}
        <button className="flex items-center"><Ic n="funnel" />:0</button>
      </div>
    </footer>
  );
}

const StatusSelect = ({ label, value }: { label: string; value: string }) => (
  <div className="grid w-[115px] items-center bg-white">
    <select aria-label={label} className="col-start-1 row-start-1 h-[11px] w-full appearance-none px-0.5 text-[#666]"><option>{value}</option></select>
    <svg width="7" height="6" viewBox="0 0 14 12" fill="none" className="pointer-events-none col-start-1 row-start-1 justify-self-end"><path d="M3 4l4 4 4-4" stroke="#999" strokeWidth="1.6" /></svg>
  </div>
);

export default function App() {
  return (
    <div lang="zh-CN" className="min-h-screen bg-white font-['Noto_Sans','Noto_Sans_CJK_SC',sans-serif]">
      <TitleBar />
      <RibbonTabs />
      <Ribbon />
      <OptionsBar />
      <div className="flex">
        <Properties />
        <ViewArea />
        <Browser />
      </div>
      <StatusBar />
    </div>
  );
}
